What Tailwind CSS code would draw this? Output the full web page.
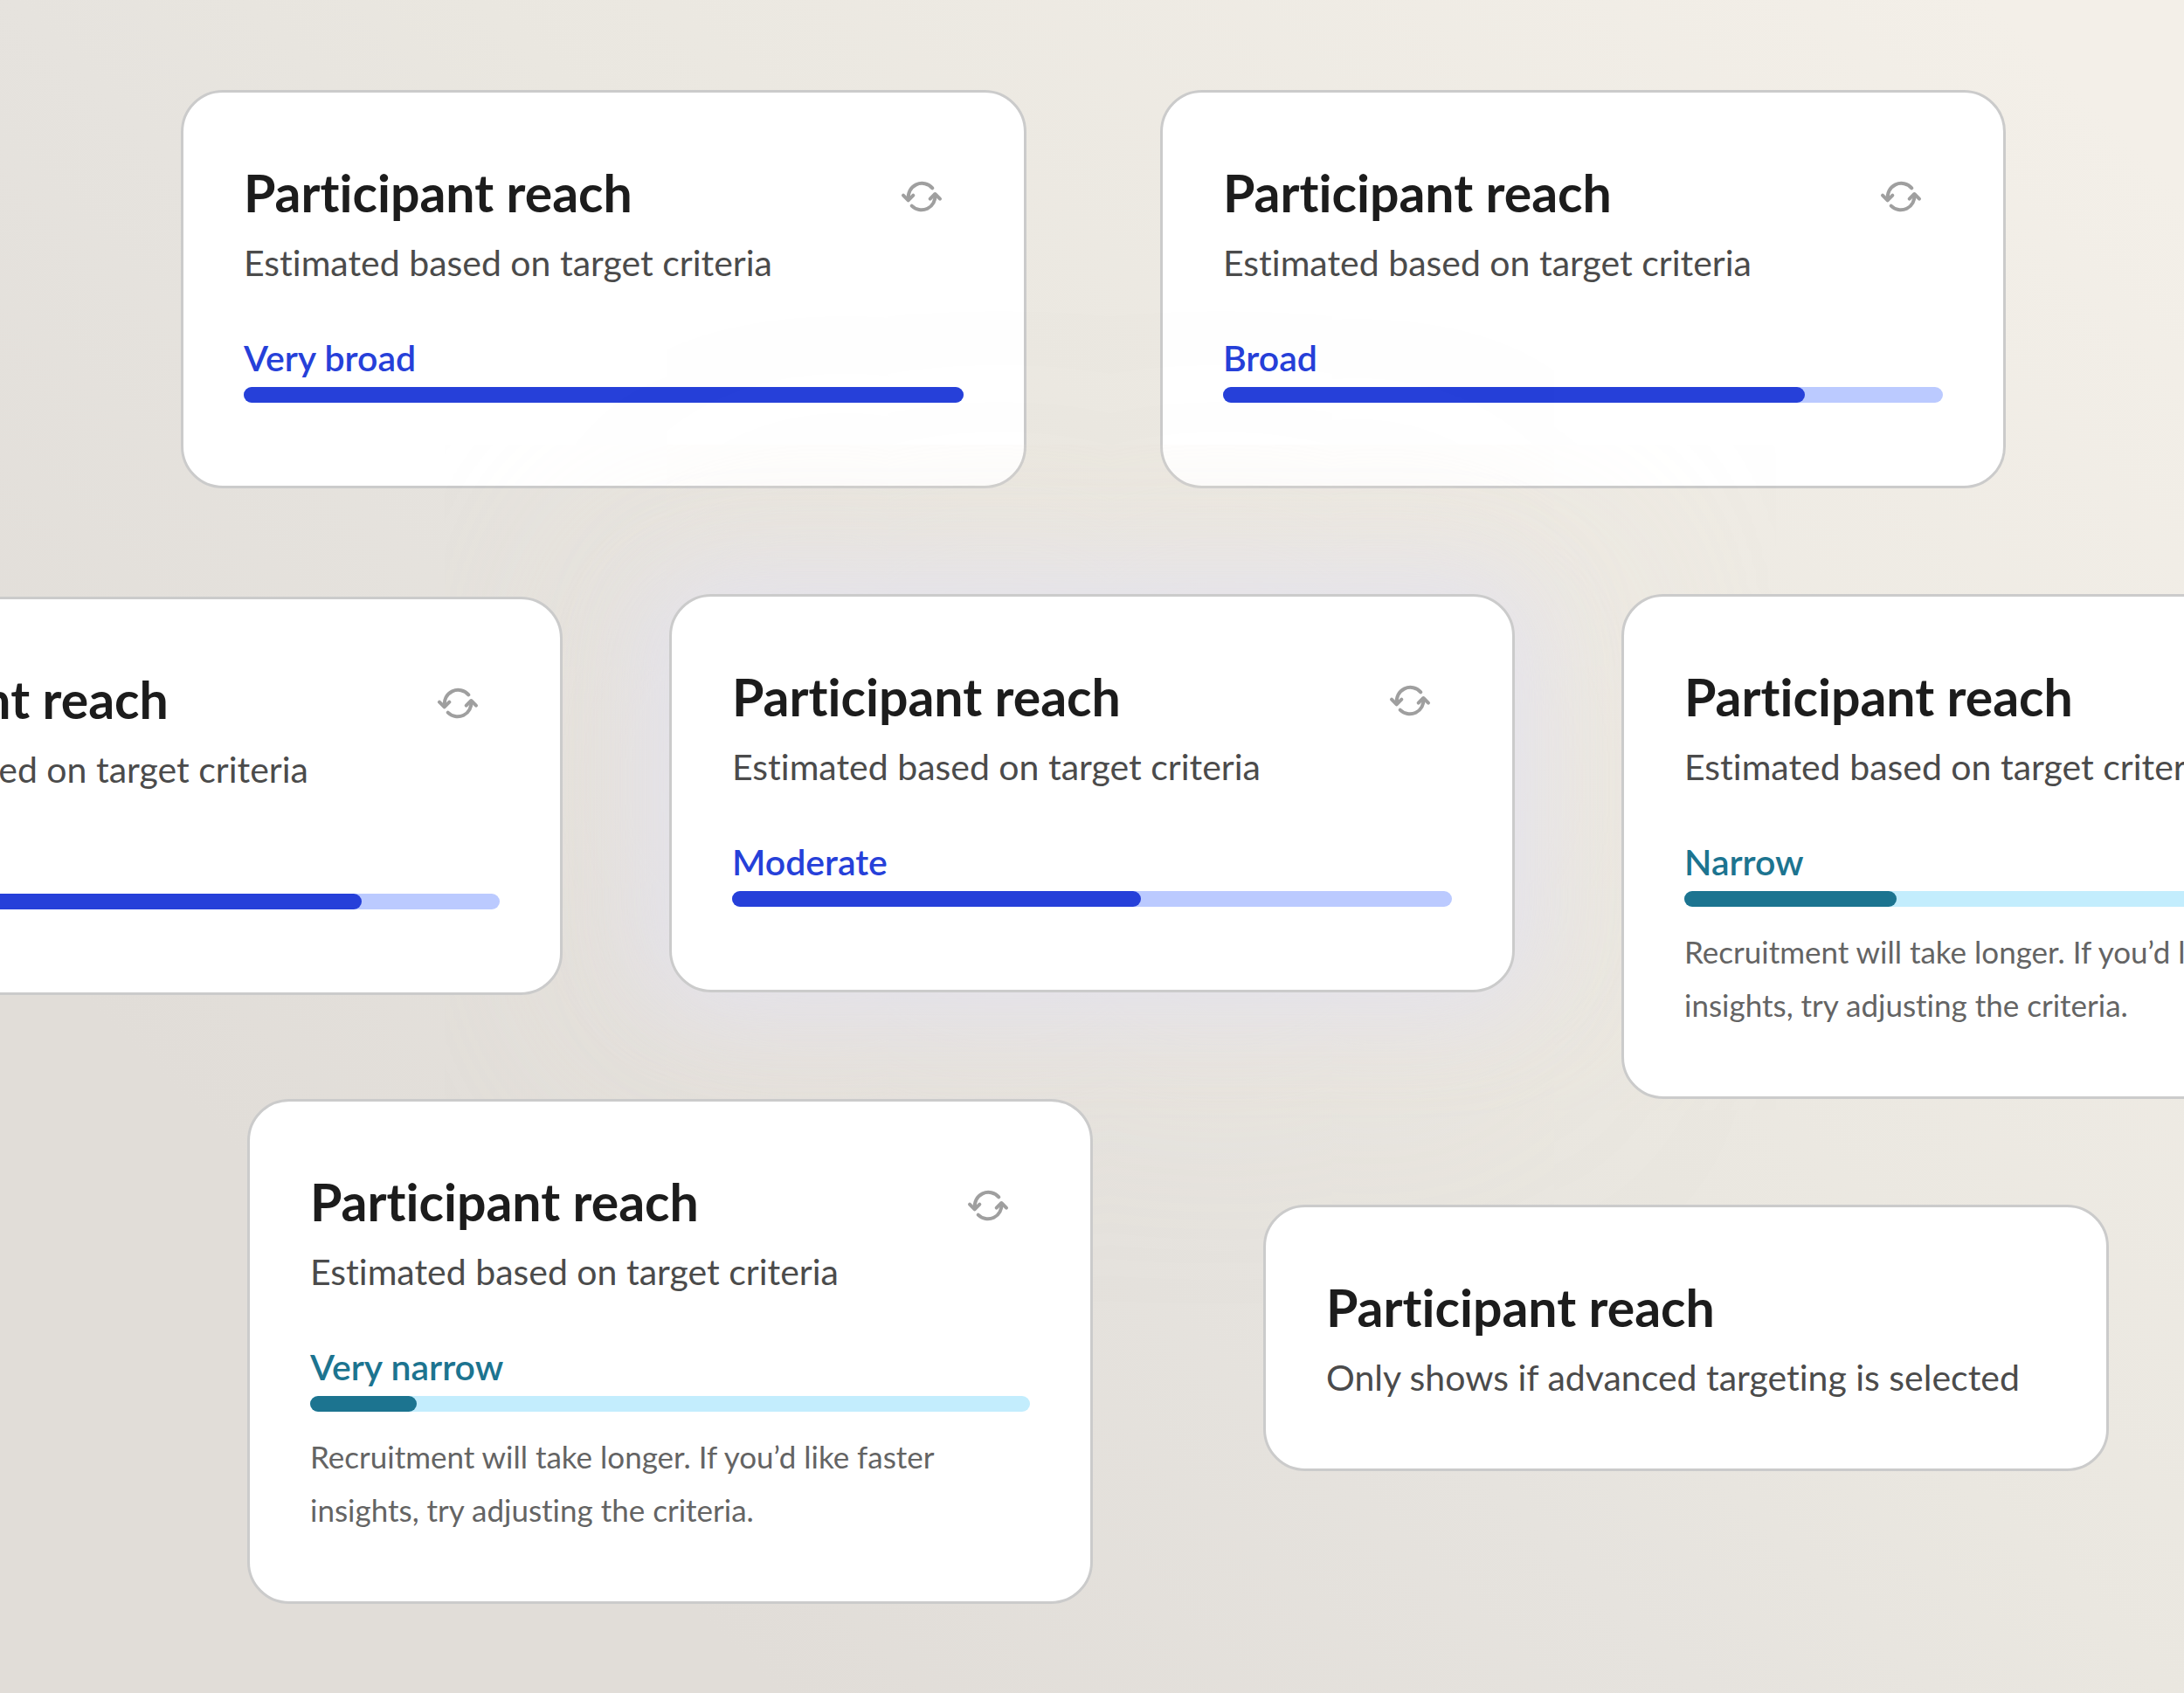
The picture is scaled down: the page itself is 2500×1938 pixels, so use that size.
<!DOCTYPE html>
<html lang="en">
<head>
<meta charset="utf-8">
<meta name="viewport" content="width=device-width, initial-scale=1">
<title>Participant reach</title>
<script src="https://cdn.jsdelivr.net/npm/@tailwindcss/browser@4"></script>
</head>
<body class="font-['Lato','Open_Sans',sans-serif] [font-variant-ligatures:no-common-ligatures]">
<svg class="hidden" aria-hidden="true">
  <symbol id="refresh" viewBox="150 74 144 120">
    <g fill="none" stroke="#9f9f9f" stroke-width="12" stroke-linecap="round" stroke-linejoin="round">
      <path d="M259 105A47 47 0 0 0 177 144"/>
      <path d="M159 130L176 147L193 130"/>
      <path d="M188 166A47 47 0 0 0 268 127"/>
      <path d="M251 142L268 125L285 142"/>
    </g>
  </symbol>
</svg>

<main class="flex min-h-screen flex-col overflow-hidden bg-[linear-gradient(45deg,#e1ddd8_20%,#e6e3de_44%,#eae7e0_56%,#f3efe8_95%)] pt-[103px] pb-[100px]">

  <div class="flex justify-center gap-[153px] pl-[3px]">
    <section class="w-[968px] shrink-0 rounded-[48px] border-3 border-[#cbcbcb] bg-white px-[69px] pt-[79px] pb-[74px]">
      <div class="flex justify-between">
        <h2 class="text-[59px] leading-[72px] font-bold text-[#1c1c1c]">Participant reach</h2>
        <button type="button" aria-label="Refresh estimate" class="flex h-16 w-24 items-center justify-center self-end"><svg class="h-10 w-12"><use href="#refresh"/></svg></button>
      </div>
      <p class="mt-3.5 text-[41px] leading-[60px] text-[#4b4b4b]">Estimated based on target criteria</p>
      <p class="mt-[49px] text-[41px] leading-[60px] font-semibold text-[#2640d9]">Very broad</p>
      <div role="meter" aria-label="Participant reach" aria-valuenow="100" class="mt-[3px] mb-[21px] h-[18px] rounded-full bg-[#bbcaff]"><div class="h-full rounded-full bg-[#2640d9]" style="width:100%"></div></div>
    </section>

    <section class="w-[968px] shrink-0 rounded-[48px] border-3 border-[#cbcbcb] bg-white px-[69px] pt-[79px] pb-[74px]">
      <div class="flex justify-between">
        <h2 class="text-[59px] leading-[72px] font-bold text-[#1c1c1c]">Participant reach</h2>
        <button type="button" aria-label="Refresh estimate" class="flex h-16 w-24 items-center justify-center self-end"><svg class="h-10 w-12"><use href="#refresh"/></svg></button>
      </div>
      <p class="mt-3.5 text-[41px] leading-[60px] text-[#4b4b4b]">Estimated based on target criteria</p>
      <p class="mt-[49px] text-[41px] leading-[60px] font-semibold text-[#2640d9]">Broad</p>
      <div role="meter" aria-label="Participant reach" aria-valuenow="81" class="mt-[3px] mb-[21px] h-[18px] rounded-full bg-[#bbcaff]"><div class="h-full rounded-full bg-[#2640d9]" style="width:80.8%"></div></div>
    </section>
  </div>

  <div class="mt-[121px] flex items-start justify-center gap-[122px]">
    <section class="relative z-10 mt-[3px] w-[968px] shrink-0 rounded-[48px] border-3 border-[#cbcbcb] bg-white px-[69px] pt-[79px] pb-[74px]">
      <div class="flex justify-between">
        <h2 class="text-[59px] leading-[72px] font-bold text-[#1c1c1c]">Participant reach</h2>
        <button type="button" aria-label="Refresh estimate" class="flex h-16 w-24 items-center justify-center self-end"><svg class="h-10 w-12"><use href="#refresh"/></svg></button>
      </div>
      <p class="mt-3.5 text-[41px] leading-[60px] text-[#4b4b4b]">Estimated based on target criteria</p>
      <p class="mt-[49px] text-[41px] leading-[60px] font-semibold text-[#2640d9]">Broad</p>
      <div role="meter" aria-label="Participant reach" aria-valuenow="81" class="mt-[3px] mb-[21px] h-[18px] rounded-full bg-[#bbcaff]"><div class="h-full rounded-full bg-[#2640d9]" style="width:80.8%"></div></div>
    </section>

    <section class="relative w-[968px] shrink-0 rounded-[48px] border-3 border-[#cbcbcb] bg-white px-[69px] pt-[79px] pb-[74px] shadow-[0_0_110px_30px_rgb(226_226_240/0.8),0_0_300px_50px_rgb(240_230_216/0.5)]">
      <div class="flex justify-between">
        <h2 class="text-[59px] leading-[72px] font-bold text-[#1c1c1c]">Participant reach</h2>
        <button type="button" aria-label="Refresh estimate" class="flex h-16 w-24 items-center justify-center self-end"><svg class="h-10 w-12"><use href="#refresh"/></svg></button>
      </div>
      <p class="mt-3.5 text-[41px] leading-[60px] text-[#4b4b4b]">Estimated based on target criteria</p>
      <p class="mt-[49px] text-[41px] leading-[60px] font-semibold text-[#2640d9]">Moderate</p>
      <div role="meter" aria-label="Participant reach" aria-valuenow="57" class="mt-[3px] mb-[21px] h-[18px] rounded-full bg-[#bbcaff]"><div class="h-full rounded-full bg-[#2640d9]" style="width:56.8%"></div></div>
    </section>

    <section class="relative w-[968px] shrink-0 rounded-[48px] border-3 border-[#cbcbcb] bg-white px-[69px] pt-[79px] pb-[74px]">
      <div class="flex justify-between">
        <h2 class="text-[59px] leading-[72px] font-bold text-[#1c1c1c]">Participant reach</h2>
        <button type="button" aria-label="Refresh estimate" class="flex h-16 w-24 items-center justify-center self-end"><svg class="h-10 w-12"><use href="#refresh"/></svg></button>
      </div>
      <p class="mt-3.5 text-[41px] leading-[60px] text-[#4b4b4b]">Estimated based on target criteria</p>
      <p class="mt-[49px] text-[41px] leading-[60px] font-semibold text-[#1c7490]">Narrow</p>
      <div role="meter" aria-label="Participant reach" aria-valuenow="30" class="mt-[3px] mb-[21px] h-[18px] rounded-full bg-[#c3edfd]"><div class="h-full rounded-full bg-[#1c7490]" style="width:29.5%"></div></div>
      <p class="text-[35px] leading-[61px] text-[#646464]">Recruitment will take longer. If you’d like faster insights, try adjusting the criteria.</p>
    </section>
  </div>

  <div class="flex items-start justify-center gap-[195px] pl-[197px]">
    <section class="relative w-[968px] shrink-0 rounded-[48px] border-3 border-[#cbcbcb] bg-white px-[69px] pt-[79px] pb-[74px]">
      <div class="flex justify-between">
        <h2 class="text-[59px] leading-[72px] font-bold text-[#1c1c1c]">Participant reach</h2>
        <button type="button" aria-label="Refresh estimate" class="flex h-16 w-24 items-center justify-center self-end"><svg class="h-10 w-12"><use href="#refresh"/></svg></button>
      </div>
      <p class="mt-3.5 text-[41px] leading-[60px] text-[#4b4b4b]">Estimated based on target criteria</p>
      <p class="mt-[49px] text-[41px] leading-[60px] font-semibold text-[#1c7490]">Very narrow</p>
      <div role="meter" aria-label="Participant reach" aria-valuenow="15" class="mt-[3px] mb-[21px] h-[18px] rounded-full bg-[#c3edfd]"><div class="h-full rounded-full bg-[#1c7490]" style="width:14.8%"></div></div>
      <p class="text-[35px] leading-[61px] text-[#646464]">Recruitment will take longer. If you’d like faster insights, try adjusting the criteria.</p>
    </section>

    <section class="relative mt-[121px] w-[968px] shrink-0 rounded-[48px] border-3 border-[#cbcbcb] bg-white px-[69px] pt-[79px] pb-[74px]">
      <h2 class="text-[59px] leading-[72px] font-bold text-[#1c1c1c]">Participant reach</h2>
      <p class="mt-3.5 text-[41px] leading-[60px] text-[#4b4b4b]">Only shows if advanced targeting is selected</p>
    </section>
  </div>
</main>
</body>
</html>
